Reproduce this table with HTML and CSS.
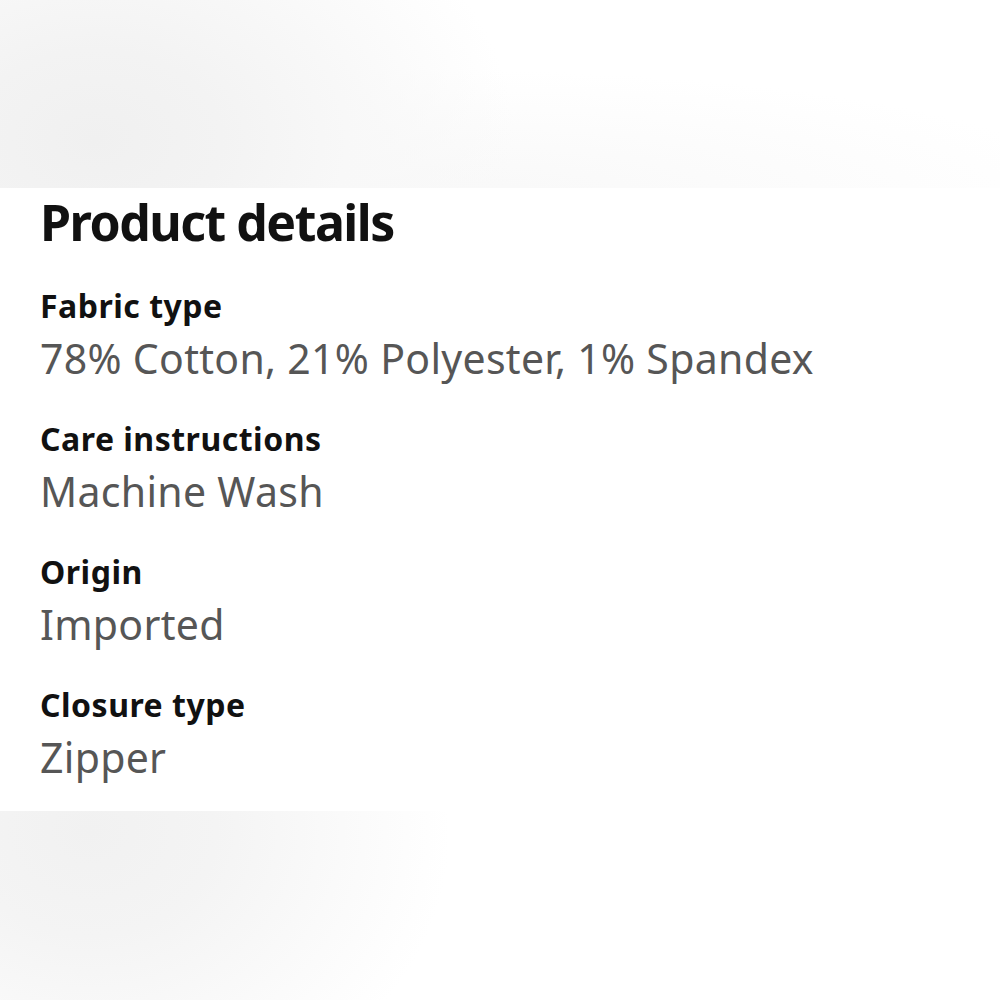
FILE: index.html
```html
<!DOCTYPE html>
<html>
<head>
<meta charset="utf-8">
<link rel="stylesheet" href="styles.css">
</head>
<body>
<div class="top-shade"></div>
<section class="card">
  <h1 class="title">Product details</h1>
  <div class="item">
    <div class="label">Fabric type</div>
    <div class="value">78% Cotton, 21% Polyester, 1% Spandex</div>
  </div>
  <div class="item">
    <div class="label">Care instructions</div>
    <div class="value">Machine Wash</div>
  </div>
  <div class="item">
    <div class="label">Origin</div>
    <div class="value">Imported</div>
  </div>
  <div class="item">
    <div class="label">Closure type</div>
    <div class="value">Zipper</div>
  </div>
</section>
<div class="bottom-shade"></div>
</body>
</html>
```
FILE: styles.css
```css
html, body {
  margin: 0;
  padding: 0;
  width: 1000px;
  height: 1000px;
  overflow: hidden;
  background: #ffffff;
  font-family: "Noto Sans", sans-serif;
}
.top-shade {
  height: 188px;
  background:
    radial-gradient(ellipse 420px 300px at 95px 140px, #f0f0f0 0%, #f3f3f3 30%, #f8f8f8 60%, rgba(255,255,255,0) 100%),
    radial-gradient(ellipse 650px 130px at 450px 200px, #f8f8f8 0%, rgba(255,255,255,0) 100%),
    #ffffff;
}
.card {
  background: #ffffff;
  height: 623px;
  box-sizing: border-box;
  padding: 4px 40px 0;
}
.title {
  margin: 0;
  font-size: 50px;
  line-height: 60px;
  font-weight: 700;
  color: #111111;
  letter-spacing: -1.5px;
}
.item {
  margin-top: 31px;
}
.item:first-of-type {
  margin-top: 34px;
}
.label {
  font-size: 32px;
  line-height: 40px;
  font-weight: 700;
  color: #111111;
  letter-spacing: 0.5px;
}
.value {
  margin-top: 2px;
  font-size: 41px;
  line-height: 60px;
  color: #565656;
  letter-spacing: 0.3px;
}
.bottom-shade {
  height: 189px;
  background:
    radial-gradient(ellipse 360px 300px at 90px 20px, #f1f1f1 0%, #f4f4f4 35%, #fafafa 70%, rgba(255,255,255,0) 100%),
    #ffffff;
}
```
